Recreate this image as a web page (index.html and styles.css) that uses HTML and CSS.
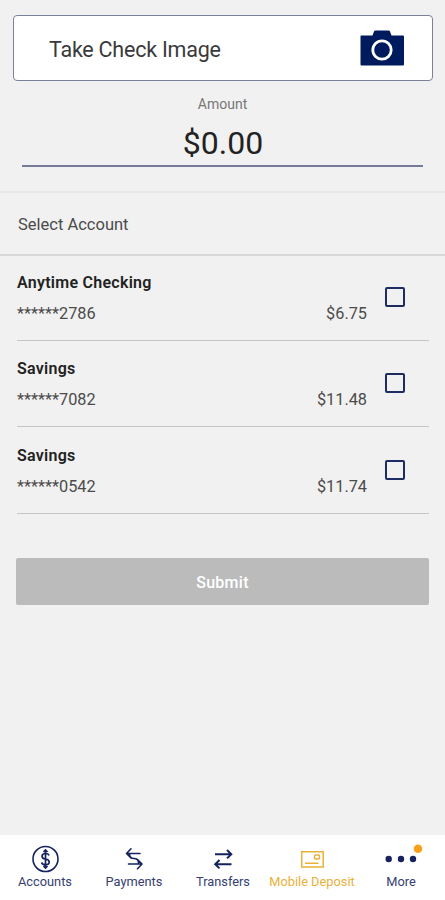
FILE: index.html
```
<!DOCTYPE html>
<html lang="en">
<head>
<meta charset="utf-8">
<title>Mobile Deposit</title>
<link rel="stylesheet" href="styles.css">
</head>
<body>
<main class="screen">
  <button class="capture">
    <span>Take Check Image</span>
    <svg class="camera" viewBox="0 0 44 36" width="44" height="36">
      <path fill="#001a5e" d="M1 5.500H12.500L14 1.500Q14.500 .5 15.500 .5H28.500Q29.500 .5 30 1.500L31.500 5.500H43Q44 5.500 44 6.500V34.500Q44 35.500 43 35.500H1.500Q.5 35.500 .5 34.500V6.500Q.5 5.500 1 5.500Z"/>
      <circle cx="22" cy="20" r="9.200" fill="none" stroke="#fff" stroke-width="2.800"/>
    </svg>
  </button>
  <section class="amount">
    <label class="amount-label">Amount</label>
    <div class="amount-value">$0.00</div>
  </section>
  <h2 class="select-title"><span>Select Account</span></h2>
  <ul class="accounts">
    <li class="account">
      <div class="details"><strong>Anytime Checking</strong><div class="figures"><span class="number">******2786</span><span>$6.75</span></div></div>
      <span class="checkbox" role="checkbox" aria-checked="false"></span>
    </li>
    <li class="account">
      <div class="details"><strong>Savings</strong><div class="figures"><span class="number">******7082</span><span>$11.48</span></div></div>
      <span class="checkbox" role="checkbox" aria-checked="false"></span>
    </li>
    <li class="account">
      <div class="details"><strong>Savings</strong><div class="figures"><span class="number">******0542</span><span>$11.74</span></div></div>
      <span class="checkbox" role="checkbox" aria-checked="false"></span>
    </li>
  </ul>
  <button class="submit">Submit</button>
</main>
<nav class="tabs">
  <a class="tab">
    <svg viewBox="0 0 40 28" width="40" height="28" fill="none" stroke="currentColor">
      <circle cx="20.500" cy="14" r="12.500" stroke-width="1.600"/>
      <path stroke-width="1.700" d="M20.500 5V23M24 10.500Q23.500 8.500 20.500 8.500Q17 8.500 17 11.200Q17 13.500 20.500 14Q24.200 14.600 24.200 17Q24.200 19.700 20.500 19.700Q17 19.700 16.700 17.300M18.500 7L20.500 5L22.500 7M18.500 21L20.500 23L22.500 21"/>
    </svg>
    <span>Accounts</span>
  </a>
  <a class="tab">
    <svg viewBox="0 0 40 28" width="40" height="28" fill="none" stroke="currentColor" stroke-width="1.600" stroke-linecap="round" stroke-linejoin="round">
      <path d="M26 8.500H13M17 3.800L12.500 8.500L17 13M15.500 9Q15.500 13.500 20 13.500Q24.500 13.500 24.500 18M14.500 19H27.500M23.500 14.500L28 19L23.500 23.700"/>
    </svg>
    <span>Payments</span>
  </a>
  <a class="tab">
    <svg viewBox="0 0 40 28" width="40" height="28" fill="none" stroke="currentColor" stroke-width="2">
      <path d="M12 9.200H28M24 5L28.300 9.200L24 13.400M28.500 19.200H12.500M16.500 15L12.200 19.200L16.500 23.400"/>
    </svg>
    <span>Transfers</span>
  </a>
  <a class="tab active">
    <svg viewBox="0 0 40 28" width="40" height="28" fill="none" stroke="currentColor" stroke-width="1.500">
      <path d="M9.700 6.700H31.200V22H9.700ZM13 18.300H26.500"/>
      <rect x="22.500" y="10" width="5" height="4" rx="1"/>
    </svg>
    <span>Mobile Deposit</span>
  </a>
  <a class="tab">
    <svg viewBox="0 0 40 28" width="40" height="28" fill="currentColor">
      <circle cx="7.700" cy="14" r="3.200"/><circle cx="20" cy="14" r="3.200"/><circle cx="32" cy="14" r="3.200"/>
      <circle cx="37" cy="3.700" r="4.300" fill="#f9a11b"/>
    </svg>
    <span>More</span>
  </a>
</nav>
</body>
</html>
```
FILE: styles.css
```
* { box-sizing: border-box; }
body {
  margin: 0;
  height: 900px;
  display: flex;
  flex-direction: column;
  overflow: hidden;
  background: #f1f1f1;
  color: #333;
  font-family: Roboto, "Liberation Sans", sans-serif;
}
button { font-family: inherit; }
svg { display: block; overflow: visible; }
.screen { flex: 1; display: flex; flex-direction: column; }
.capture {
  flex: none;
  height: 66px;
  margin: 15px 12px 0 13px;
  padding: 0 28px 0 35px;
  display: flex;
  align-items: center;
  justify-content: space-between;
  border: 1px solid #7d8197;
  border-radius: 4px;
  background: #fff;
  color: #3a3a3a;
  font-size: 21.500px;
  letter-spacing: -.23px;
}
.capture span { padding-top: 2px; }
.amount {
  height: 86px;
  margin: 0 22px;
  display: flex;
  flex-direction: column;
  align-items: center;
  border-bottom: 2px solid #747a98;
}
.amount-label { margin-top: 14px; line-height: 18px; font-size: 14px; color: #777; }
.amount-value { margin-top: 10px; padding-left: 1px; line-height: 40px; font-size: 32px; color: #222; }
.select-title {
  height: 65px;
  margin: 24px 0 0;
  padding: 2px 18px 0;
  display: flex;
  align-items: center;
  border-top: 2px solid #e6e6e6;
  border-bottom: 2px solid #d8d8d8;
  font-size: 16.500px;
  font-weight: 400;
  color: #4b4b4b;
}
.accounts { margin: 0 16px 0 17px; padding: 0; list-style: none; }
.account {
  height: 86.500px;
  padding-top: 17.500px;
  display: flex;
  border-bottom: 1px solid #c5c5c5;
}
.account:first-child { height: 84.500px; padding-top: 16px; }
.details { width: 350px; }
.details strong { display: block; line-height: 22px; font-size: 16px; letter-spacing: .27px; font-weight: 600; color: #222; }
.figures { margin-top: 9px; display: flex; justify-content: space-between; line-height: 22px; font-size: 16.300px; color: #4b4b4b; }
.checkbox {
  width: 20px;
  height: 20px;
  margin: 15px 0 0 18px;
  border: 2px solid #1f2c63;
  border-radius: 2px;
}
.submit {
  height: 47px;
  margin: 44.500px 16px 0;
  padding-top: 3px;
  border: 0;
  border-radius: 2px;
  background: #bbb;
  color: #fff;
  font-size: 16px;
  letter-spacing: .25px;
  font-weight: 500;
}
.tabs {
  height: 65px;
  display: grid;
  grid-template-columns: repeat(5, 1fr);
  background: #fff;
}
.tab {
  padding-top: 10px;
  display: flex;
  flex-direction: column;
  align-items: center;
  color: #15225e;
  font-size: 12.800px;
}
.tab span { padding-left: 1px; line-height: 18px; white-space: nowrap; color: #36406f; }
.tab.active, .tab.active span { color: #e9b03a; }
```
